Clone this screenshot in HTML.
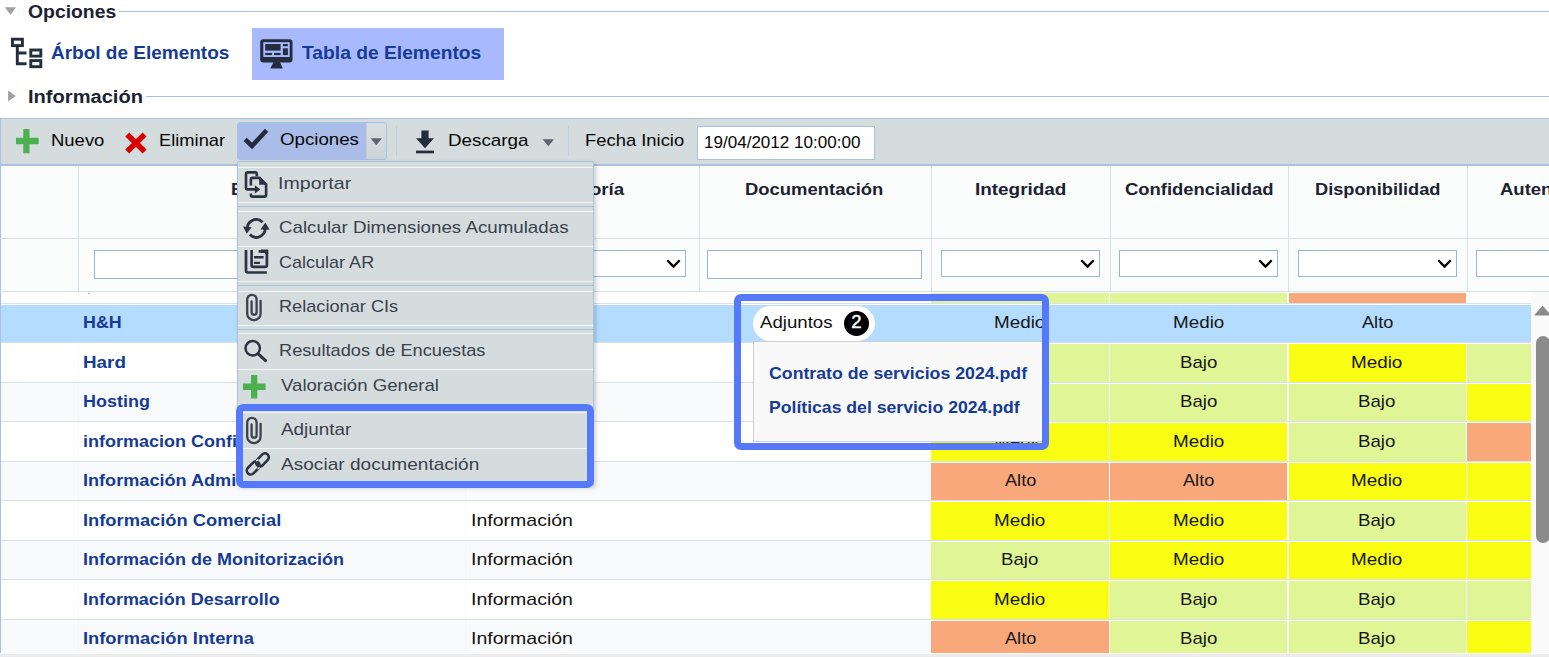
<!DOCTYPE html>
<html><head><meta charset="utf-8">
<style>
*{box-sizing:border-box;margin:0;padding:0}
html,body{width:1549px;height:657px;overflow:hidden;background:#fff}
body{font-family:"Liberation Sans",sans-serif;position:relative;color:#000}
.abs,body>*{position:absolute}
.t{position:absolute;white-space:nowrap;line-height:1;transform-origin:0 0}
/* headings */
.hd{font-weight:bold;font-size:18.5px;color:#1b2231;letter-spacing:.35px}
.hline{height:1px;background:#a9c1dc}
.tab{font-weight:bold;font-size:18px;color:#153b97;letter-spacing:.9px}
/* toolbar */
#tb{left:0;top:118px;width:1549px;height:47px;background:#d5dcdd;border-top:1px solid #a9c1dc;border-bottom:1px solid #a9c1dc;border-left:1px solid #a9c1dc}
.tl{font-size:17px;color:#060606;letter-spacing:.75px}
.sep{width:1px;background:#bfd0e2;top:126px;height:30px}
/* table */
#hdr{left:1px;top:165px;width:1548px;height:127px;background:#fbfcfc;border-top:1px solid #a9c1dc}
.vl{width:1px;background:#d6dfe1;top:166px;height:126px}
.hl{height:1px;background:#d6dfe1;left:0;width:1549px}
.th{font-weight:bold;font-size:16.5px;color:#1b2231;letter-spacing:1.1px;text-align:center}
.inp{background:#fff;border:1px solid #98b5da;border-radius:0}
.chev{position:absolute;right:4.5px;top:7.8px;width:15px;height:9.6px}
.rb{left:1px;width:1530px;height:1px;background:#d8e1e6}
.rbg{left:1px;width:1530px}
.cc{height:37.5px}
/* menu */
#menu{left:237px;top:161px;width:357px;height:325px;background:#d5dcdd;border:1px solid #a9c1dc;border-radius:2px;box-shadow:2px 2px 4px rgba(0,0,0,.18)}
.mi{position:absolute;left:0;width:355px;height:35px}
.mt{position:absolute;left:42px;top:8px;font-size:17px;letter-spacing:.95px;color:#3d444d;white-space:nowrap;line-height:19px}
.ml{position:absolute;left:0;width:355px;height:1px}
.ico{position:absolute}
.hbox{border:7px solid #5679fb;border-radius:8px}
</style></head><body>

<!-- Opciones heading -->
<svg style="left:4px;top:6px" width="14" height="10" viewBox="4 6 14 10"><path d="M4.9 7.2H16L10.45 14.7z" fill="#a0a0a0"/></svg>
<span class="t" style="left:28.11px;top:3.60px;font-size:17.5px;font-weight:bold;transform:scaleX(1.1059);color:#1b2231;">Opciones</span>
<div class="hline" style="left:119px;top:11px;width:1430px"></div>

<!-- tabs -->
<svg style="left:10px;top:37px" width="34" height="32" viewBox="10 37 34 32" fill="none" stroke="#222d3e" stroke-width="2.9">
<rect x="12.4" y="39.2" width="10" height="6.4"/>
<rect x="30.8" y="50" width="10" height="6.1"/>
<rect x="30.8" y="60.6" width="10" height="6.1"/>
<path d="M17.3 46.5V63.7H26.5M17.3 53H26.5"/>
</svg>
<span class="t" style="left:50.93px;top:43.10px;font-size:19px;font-weight:bold;color:#153b97;">Árbol de Elementos</span>

<div style="left:252px;top:28px;width:252px;height:52px;background:#a8bafd"></div>
<svg style="left:259px;top:38px" width="36" height="32" viewBox="259 38 36 32">
<rect x="260.2" y="39.2" width="32.3" height="23.4" rx="3" fill="#222d3e"/>
<rect x="263.3" y="42.2" width="26.4" height="14.8" fill="#a8bafd"/>
<g fill="#222d3e"><rect x="265.2" y="44" width="15.4" height="6.6"/><rect x="282.9" y="44" width="5" height="2.2"/><rect x="282.9" y="48.3" width="5" height="6.8"/><rect x="265.2" y="52.9" width="6.7" height="2.2"/><rect x="274" y="52.9" width="6.6" height="2.2"/>
<path d="M273.6 62H279.9L282.8 68.4H270.2z"/></g>
</svg>
<span class="t" style="left:301.58px;top:43.10px;font-size:19px;font-weight:bold;transform:scaleX(1.0127);color:#153b97;">Tabla de Elementos</span>

<!-- Informacion heading -->
<svg style="left:6px;top:89px" width="12" height="14" viewBox="6 89 12 14"><path d="M8.1 90.4L15.8 96 8.1 101.6z" fill="#a0a0a0"/></svg>
<span class="t" style="left:28.06px;top:88.80px;font-size:17.5px;font-weight:bold;transform:scaleX(1.1482);color:#1b2231;">Información</span>
<div class="hline" style="left:146px;top:96px;width:1403px"></div>

<!-- toolbar -->
<div id="tb"></div>
<svg style="left:16px;top:129px" width="23" height="25" viewBox="0 0 23 25"><path d="M7.3 0h6.2v8.8H22.6v6.4H13.5V24.2H7.3V15.2H0V8.8H7.3z" fill="#4caf50"/></svg>
<span class="t" style="left:51.18px;top:132.00px;font-size:17px;transform:scaleX(1.0865);color:#060606;">Nuevo</span>
<svg style="left:124px;top:131px" width="24" height="24" viewBox="0 0 24 24"><path d="M3.2 3.4L20.6 20.6M20.6 3.4L3.2 20.6" stroke="#d60000" stroke-width="5.6" fill="none"/></svg>
<span class="t" style="left:158.90px;top:132.00px;font-size:17px;transform:scaleX(1.0766);color:#060606;">Eliminar</span>

<div style="left:237px;top:122px;width:150px;height:38px;border:1px solid #a9bfe6;border-radius:3px;background:#d0d7d9;overflow:hidden"><div style="position:absolute;left:0;top:0;width:128px;height:36px;background:#a9bde8"></div><div style="position:absolute;left:128px;top:0;width:21px;height:36px;background:linear-gradient(#d9dfe1,#cdd4d7);border-left:1px solid #c3cdd9"></div></div>
<svg style="left:243px;top:128.2px" width="26" height="22" viewBox="0 0 26 22"><path d="M2.2 11.4L9 18L23.6 2.2" stroke="#232c3b" stroke-width="4.6" fill="none"/></svg>
<span class="t" style="left:279.51px;top:130.90px;font-size:17px;transform:scaleX(1.0994);color:#060606;">Opciones</span>
<svg style="left:370px;top:138px" width="13" height="8" viewBox="0 0 13 8"><path d="M.6 .3H12L6.3 7.2z" fill="#5b6470"/></svg>
<div class="sep" style="left:396px"></div>
<svg style="left:415px;top:130px" width="20" height="24" viewBox="0 0 20 24"><path d="M6.4 .5h7.2v7.7h5.4L10 18.2 1 8.2h5.4z" fill="#232c3b"/><rect x="1" y="20.6" width="18" height="2.7" fill="#232c3b"/></svg>
<span class="t" style="left:448.26px;top:132.00px;font-size:17px;transform:scaleX(1.1056);color:#060606;">Descarga</span>
<svg style="left:542px;top:139px" width="13" height="8" viewBox="0 0 13 8"><path d="M.6 .3H12L6.3 7.2z" fill="#5b6470"/></svg>
<div class="sep" style="left:568px"></div>
<span class="t" style="left:584.69px;top:132.00px;font-size:17px;transform:scaleX(1.0821);color:#060606;">Fecha Inicio</span>
<div class="inp" style="left:697px;top:126px;width:178px;height:34px;border-color:#a9c1dc"></div>
<span class="t" style="left:703.60px;top:134.00px;font-size:17px;transform:scaleX(1.0025);color:#060606;">19/04/2012 10:00:00</span>

<!-- table header -->
<div id="hdr"></div>
<div style="left:0;top:165px;width:1px;height:492px;background:#a9c1dc"></div>
<div class="vl" style="left:78px"></div>
<div class="vl" style="left:463px"></div>
<div class="vl" style="left:699px"></div>
<div class="vl" style="left:931px"></div>
<div class="vl" style="left:1110px"></div>
<div class="vl" style="left:1288px"></div>
<div class="vl" style="left:1467px"></div>
<div class="hl" style="top:238px"></div>
<div class="hl" style="top:291px"></div>
<span class="t" style="left:231.42px;top:181.20px;font-size:17px;font-weight:bold;transform:scaleX(1.0413);color:#1b2231;">Elemento</span>
<span class="t" style="left:538.48px;top:181.20px;font-size:17px;font-weight:bold;transform:scaleX(1.0987);color:#1b2231;">Categoría</span>
<span class="t" style="left:745.37px;top:181.20px;font-size:17px;font-weight:bold;transform:scaleX(1.0844);color:#1b2231;">Documentación</span>
<span class="t" style="left:974.53px;top:181.20px;font-size:17px;font-weight:bold;transform:scaleX(1.1125);color:#1b2231;">Integridad</span>
<span class="t" style="left:1124.74px;top:181.20px;font-size:17px;font-weight:bold;transform:scaleX(1.0841);color:#1b2231;">Confidencialidad</span>
<span class="t" style="left:1314.78px;top:181.20px;font-size:17px;font-weight:bold;transform:scaleX(1.0710);color:#1b2231;">Disponibilidad</span>
<span class="t" style="left:1500.24px;top:181.20px;font-size:17px;font-weight:bold;transform:scaleX(1.0877);color:#1b2231;">Autenticidad</span>
<div class="inp" style="left:94px;top:250px;width:360px;height:29px"></div>
<div class="inp" style="left:473px;top:250px;width:213px;height:27px"><svg class="chev" viewBox="0 0 14 9"><path d="M1.2 1.2L7 7.2 12.8 1.2" stroke="#000" stroke-width="2.2" fill="none"/></svg></div>
<div class="inp" style="left:707px;top:250px;width:215px;height:29px"></div>
<div class="inp" style="left:941px;top:250px;width:159px;height:27px"><svg class="chev" viewBox="0 0 14 9"><path d="M1.2 1.2L7 7.2 12.8 1.2" stroke="#000" stroke-width="2.2" fill="none"/></svg></div>
<div class="inp" style="left:1119px;top:250px;width:159px;height:27px"><svg class="chev" viewBox="0 0 14 9"><path d="M1.2 1.2L7 7.2 12.8 1.2" stroke="#000" stroke-width="2.2" fill="none"/></svg></div>
<div class="inp" style="left:1298px;top:250px;width:159px;height:27px"><svg class="chev" viewBox="0 0 14 9"><path d="M1.2 1.2L7 7.2 12.8 1.2" stroke="#000" stroke-width="2.2" fill="none"/></svg></div>
<div class="inp" style="left:1476px;top:250px;width:159px;height:27px"></div>

<!-- partial row above -->
<div style="left:931px;top:293px;width:178px;height:10px;background:#dff596"></div>
<div style="left:1110px;top:293px;width:177.3px;height:10px;background:#dff596"></div>
<div style="left:1288.6px;top:293px;width:177.2px;height:10px;background:#f9a87b"></div>

<div class="rb" style="top:302.80px"></div>
<div class="rbg" style="top:304.80px;height:37.50px;background:#b3dcfe"></div>
<span class="t" style="left:82.81px;top:314.10px;font-size:17px;font-weight:bold;transform:scaleX(1.0507);color:#153b97;">H&amp;H</span>
<span class="t" style="left:993.95px;top:314.10px;font-size:17px;transform:scaleX(1.1088);color:#161616;">Medio</span>
<span class="t" style="left:1172.65px;top:314.10px;font-size:17px;transform:scaleX(1.1088);color:#161616;">Medio</span>
<span class="t" style="left:1361.71px;top:314.10px;font-size:17px;transform:scaleX(1.0684);color:#161616;">Alto</span>
<div class="rb" style="top:342.30px"></div>
<div class="rbg" style="top:343.30px;height:38.50px;background:#fff"></div>
<div class="cc" style="left:931px;width:178.0px;top:344.30px;background:#dff596"></div>
<div class="cc" style="left:1110px;width:177.3px;top:344.30px;background:#dff596"></div>
<div class="cc" style="left:1288.6px;width:177.2px;top:344.30px;background:#f8fd12"></div>
<div class="cc" style="left:1467.2px;width:63.8px;top:344.30px;background:#dff596"></div>
<span class="t" style="left:82.74px;top:353.60px;font-size:17px;font-weight:bold;transform:scaleX(1.1076);color:#153b97;">Hard</span>
<span class="t" style="left:1179.67px;top:353.60px;font-size:17px;transform:scaleX(1.0966);color:#161616;">Bajo</span>
<span class="t" style="left:1350.95px;top:353.60px;font-size:17px;transform:scaleX(1.1088);color:#161616;">Medio</span>
<div class="rb" style="top:381.80px"></div>
<div class="rbg" style="top:382.80px;height:38.50px;background:#f9fafb"></div>
<div class="cc" style="left:931px;width:178.0px;top:383.80px;background:#dff596"></div>
<div class="cc" style="left:1110px;width:177.3px;top:383.80px;background:#dff596"></div>
<div class="cc" style="left:1288.6px;width:177.2px;top:383.80px;background:#dff596"></div>
<div class="cc" style="left:1467.2px;width:63.8px;top:383.80px;background:#f8fd12"></div>
<span class="t" style="left:82.80px;top:393.10px;font-size:17px;font-weight:bold;transform:scaleX(1.0575);color:#153b97;">Hosting</span>
<span class="t" style="left:1179.67px;top:393.10px;font-size:17px;transform:scaleX(1.0966);color:#161616;">Bajo</span>
<span class="t" style="left:1357.97px;top:393.10px;font-size:17px;transform:scaleX(1.0966);color:#161616;">Bajo</span>
<div class="rb" style="top:421.30px"></div>
<div class="rbg" style="top:422.30px;height:38.50px;background:#fff"></div>
<div class="cc" style="left:931px;width:178.0px;top:423.30px;background:#f8fd12"></div>
<div class="cc" style="left:1110px;width:177.3px;top:423.30px;background:#f8fd12"></div>
<div class="cc" style="left:1288.6px;width:177.2px;top:423.30px;background:#dff596"></div>
<div class="cc" style="left:1467.2px;width:63.8px;top:423.30px;background:#f9a87b"></div>
<span class="t" style="left:82.74px;top:432.60px;font-size:17px;font-weight:bold;transform:scaleX(1.0584);color:#153b97;">informacion Confi</span>
<span class="t" style="left:993.95px;top:432.60px;font-size:17px;transform:scaleX(1.1088);color:#161616;">Medio</span>
<span class="t" style="left:1172.65px;top:432.60px;font-size:17px;transform:scaleX(1.1088);color:#161616;">Medio</span>
<span class="t" style="left:1357.97px;top:432.60px;font-size:17px;transform:scaleX(1.0966);color:#161616;">Bajo</span>
<div class="rb" style="top:460.80px"></div>
<div class="rbg" style="top:461.80px;height:38.50px;background:#f9fafb"></div>
<div class="cc" style="left:931px;width:178.0px;top:462.80px;background:#f9a87b"></div>
<div class="cc" style="left:1110px;width:177.3px;top:462.80px;background:#f9a87b"></div>
<div class="cc" style="left:1288.6px;width:177.2px;top:462.80px;background:#f8fd12"></div>
<div class="cc" style="left:1467.2px;width:63.8px;top:462.80px;background:#f8fd12"></div>
<span class="t" style="left:82.79px;top:472.10px;font-size:17px;font-weight:bold;transform:scaleX(1.0649);color:#153b97;">Información Admi</span>
<span class="t" style="left:1004.71px;top:472.10px;font-size:17px;transform:scaleX(1.0684);color:#161616;">Alto</span>
<span class="t" style="left:1183.41px;top:472.10px;font-size:17px;transform:scaleX(1.0684);color:#161616;">Alto</span>
<span class="t" style="left:1350.95px;top:472.10px;font-size:17px;transform:scaleX(1.1088);color:#161616;">Medio</span>
<div class="rb" style="top:500.30px"></div>
<div class="rbg" style="top:501.30px;height:38.50px;background:#fff"></div>
<div class="cc" style="left:931px;width:178.0px;top:502.30px;background:#f8fd12"></div>
<div class="cc" style="left:1110px;width:177.3px;top:502.30px;background:#f8fd12"></div>
<div class="cc" style="left:1288.6px;width:177.2px;top:502.30px;background:#dff596"></div>
<div class="cc" style="left:1467.2px;width:63.8px;top:502.30px;background:#f8fd12"></div>
<span class="t" style="left:82.78px;top:511.60px;font-size:17px;font-weight:bold;transform:scaleX(1.0760);color:#153b97;">Información Comercial</span>
<span class="t" style="left:470.90px;top:511.60px;font-size:17px;transform:scaleX(1.1481);color:#111;">Información</span>
<span class="t" style="left:993.95px;top:511.60px;font-size:17px;transform:scaleX(1.1088);color:#161616;">Medio</span>
<span class="t" style="left:1172.65px;top:511.60px;font-size:17px;transform:scaleX(1.1088);color:#161616;">Medio</span>
<span class="t" style="left:1357.97px;top:511.60px;font-size:17px;transform:scaleX(1.0966);color:#161616;">Bajo</span>
<div class="rb" style="top:539.80px"></div>
<div class="rbg" style="top:540.80px;height:38.50px;background:#f9fafb"></div>
<div class="cc" style="left:931px;width:178.0px;top:541.80px;background:#dff596"></div>
<div class="cc" style="left:1110px;width:177.3px;top:541.80px;background:#f8fd12"></div>
<div class="cc" style="left:1288.6px;width:177.2px;top:541.80px;background:#f8fd12"></div>
<div class="cc" style="left:1467.2px;width:63.8px;top:541.80px;background:#f8fd12"></div>
<span class="t" style="left:82.80px;top:551.10px;font-size:17px;font-weight:bold;transform:scaleX(1.0589);color:#153b97;">Información de Monitorización</span>
<span class="t" style="left:470.90px;top:551.10px;font-size:17px;transform:scaleX(1.1481);color:#111;">Información</span>
<span class="t" style="left:1000.97px;top:551.10px;font-size:17px;transform:scaleX(1.0966);color:#161616;">Bajo</span>
<span class="t" style="left:1172.65px;top:551.10px;font-size:17px;transform:scaleX(1.1088);color:#161616;">Medio</span>
<span class="t" style="left:1350.95px;top:551.10px;font-size:17px;transform:scaleX(1.1088);color:#161616;">Medio</span>
<div class="rb" style="top:579.30px"></div>
<div class="rbg" style="top:580.30px;height:38.50px;background:#fff"></div>
<div class="cc" style="left:931px;width:178.0px;top:581.30px;background:#f8fd12"></div>
<div class="cc" style="left:1110px;width:177.3px;top:581.30px;background:#dff596"></div>
<div class="cc" style="left:1288.6px;width:177.2px;top:581.30px;background:#dff596"></div>
<div class="cc" style="left:1467.2px;width:63.8px;top:581.30px;background:#dff596"></div>
<span class="t" style="left:82.80px;top:590.60px;font-size:17px;font-weight:bold;transform:scaleX(1.0565);color:#153b97;">Información Desarrollo</span>
<span class="t" style="left:470.90px;top:590.60px;font-size:17px;transform:scaleX(1.1481);color:#111;">Información</span>
<span class="t" style="left:993.95px;top:590.60px;font-size:17px;transform:scaleX(1.1088);color:#161616;">Medio</span>
<span class="t" style="left:1179.67px;top:590.60px;font-size:17px;transform:scaleX(1.0966);color:#161616;">Bajo</span>
<span class="t" style="left:1357.97px;top:590.60px;font-size:17px;transform:scaleX(1.0966);color:#161616;">Bajo</span>
<div class="rb" style="top:618.80px"></div>
<div class="rbg" style="top:619.80px;height:38.50px;background:#f9fafb"></div>
<div class="cc" style="left:931px;width:178.0px;top:620.80px;background:#f9a87b"></div>
<div class="cc" style="left:1110px;width:177.3px;top:620.80px;background:#dff596"></div>
<div class="cc" style="left:1288.6px;width:177.2px;top:620.80px;background:#dff596"></div>
<div class="cc" style="left:1467.2px;width:63.8px;top:620.80px;background:#f8fd12"></div>
<span class="t" style="left:82.78px;top:630.10px;font-size:17px;font-weight:bold;transform:scaleX(1.0764);color:#153b97;">Información Interna</span>
<span class="t" style="left:470.90px;top:630.10px;font-size:17px;transform:scaleX(1.1481);color:#111;">Información</span>
<span class="t" style="left:1004.71px;top:630.10px;font-size:17px;transform:scaleX(1.0684);color:#161616;">Alto</span>
<span class="t" style="left:1179.67px;top:630.10px;font-size:17px;transform:scaleX(1.0966);color:#161616;">Bajo</span>
<span class="t" style="left:1357.97px;top:630.10px;font-size:17px;transform:scaleX(1.0966);color:#161616;">Bajo</span>

<div style="left:78px;top:343px;width:1px;height:310px;background:rgba(190,200,210,.08)"></div>
<div style="left:465px;top:343px;width:1px;height:310px;background:rgba(190,200,210,.08)"></div>
<div style="left:88px;top:293px;width:2px;height:1px;background:#a9b6d6"></div>
<!-- scrollbars -->
<div style="left:1531px;top:292px;width:18px;height:362px;background:#fafafa"></div>
<svg style="left:1534px;top:305px" width="15" height="11" viewBox="0 0 15 11"><path d="M0 10.4L8.6 .6 17 10.4z" fill="#8b8b8b"/></svg>
<div style="left:1536.3px;top:336px;width:14px;height:207px;background:#8b8b8b;border-radius:7px"></div>
<div style="left:0;top:652.7px;width:1549px;height:1px;background:#fff"></div>
<div style="left:0;top:653.6px;width:1549px;height:4px;background:#ececec"></div>

<!-- Adjuntos popup -->
<div style="left:753px;top:340.6px;width:292px;height:101px;background:#f9f9fa;border:1px solid #cfcfcf"></div>
<div style="left:753px;top:306px;width:122px;height:35px;background:#fff;border-radius:17.5px"></div>
<span class="t" style="left:759.66px;top:314.10px;font-size:17px;transform:scaleX(1.0960);color:#111;">Adjuntos</span>
<div style="left:844px;top:310.5px;width:25px;height:25px;border-radius:50%;background:#000"></div>
<span class="t" style="left:844px;width:25px;top:313.4px;font-size:18.5px;-webkit-text-stroke:.45px #fff;color:#fff;text-align:center">2</span>
<span class="t" style="left:769.27px;top:364.60px;font-size:17px;font-weight:bold;transform:scaleX(1.0427);color:#153b97;">Contrato de servicios 2024.pdf</span>
<span class="t" style="left:768.82px;top:399.00px;font-size:17px;font-weight:bold;transform:scaleX(1.0362);color:#153b97;">Políticas del servicio 2024.pdf</span>
<div class="hbox" style="left:733.8px;top:294.3px;width:315.5px;height:156.1px;border-radius:7px"></div>

<!-- menu -->
<div id="menu">
<div class="ml" style="top:4.9px;background:#f4f7f7"></div>
<div class="ml" style="top:40.2px;background:#f4f7f7"></div>
<div class="ml" style="top:43.9px;background:#a9c1dc"></div>
<div class="ml" style="top:48.9px;background:#f4f7f7"></div>
<div class="ml" style="top:83.6px;background:#f4f7f7"></div>
<div class="ml" style="top:118.9px;background:#f4f7f7"></div>
<div class="ml" style="top:123.0px;background:#a9c1dc"></div>
<div class="ml" style="top:128.5px;background:#f4f7f7"></div>
<div class="ml" style="top:162.8px;background:#f4f7f7"></div>
<div class="ml" style="top:167.1px;background:#a9c1dc"></div>
<div class="ml" style="top:171.4px;background:#f4f7f7"></div>
<div class="ml" style="top:206.8px;background:#f4f7f7"></div>
<div class="ml" style="top:241.9px;background:#f4f7f7"></div>
<div class="ml" style="top:245.9px;background:#a9c1dc"></div>
<div class="ml" style="top:250.3px;background:#f4f7f7"></div>
<div class="ml" style="top:285.9px;background:#f4f7f7"></div>
<div class="ml" style="top:320.5px;background:#f4f7f7"></div>
<span class="t" style="left:40.40px;top:13.10px;font-size:17px;letter-spacing:0.067px;transform:scaleX(1.1500);color:#39414c;">Importar</span>
<svg class="ico" style="left:5px;top:7px" width="27" height="31" viewBox="243 169 27 31" fill="none" stroke="#2a3341" stroke-width="2.6"><path d="M256.8 176.2V174Q256.8 172.4 255.2 172.4H247.6Q246 172.4 246 174V187.8Q246 189.4 247.6 189.4H256"/><path d="M250.9 185.6V179.5Q250.9 177.9 252.5 177.9H259.6L266.1 184.4V195Q266.1 196.6 264.5 196.6H252.5Q250.9 196.6 250.9 195V193.4"/><path d="M259.2 176.8V184.7H267.2Z" fill="#2a3341" stroke="none"/><path d="M254.8 185.3L260.4 189.4L254.8 193.5Z" fill="#2a3341" stroke="none"/></svg>
<span class="t" style="left:41.45px;top:57.20px;font-size:17px;transform:scaleX(1.1021);color:#39414c;">Calcular Dimensiones Acumuladas</span>
<svg class="ico" style="left:3px;top:54px" width="30" height="25" viewBox="241 216 30 25" fill="none" stroke="#2a3341" stroke-width="2.8"><path d="M247.4 229.6A8.9 8.9 0 0 1 262.6 222.2"/><path d="M265 227.2A8.9 8.9 0 0 1 249.8 234.6" /><path d="M260.4 229.4L265.4 222.6L269.6 229.8Z" fill="#2a3341" stroke="none"/><path d="M243 226.6L251.6 227.2L246.8 233.8Z" fill="#2a3341" stroke="none"/></svg>
<span class="t" style="left:41.48px;top:91.90px;font-size:17px;transform:scaleX(1.0602);color:#39414c;">Calcular AR</span>
<svg class="ico" style="left:5px;top:86px" width="27" height="27" viewBox="243 248 27 27" fill="none" stroke="#2a3341" stroke-width="2.7"><path d="M246 250V270.6Q246 272.5 247.9 272.5H266.8"/><path d="M251.6 250V265Q251.6 266.9 253.5 266.9H265Q266.9 266.9 266.9 265V253.3Q266.9 251.4 265 251.4H258.6"/><path d="M261 251.2H266.6V254" stroke-width="3.4"/><path d="M254 257.2H263.6M254 262.9H260" stroke-width="2.4"/></svg>
<span class="t" style="left:40.91px;top:135.80px;font-size:17px;transform:scaleX(1.0687);color:#39414c;">Relacionar CIs</span>
<svg class="ico" style="left:6px;top:129.7px" width="20" height="31" viewBox="244 291.7 20 31" fill="none" stroke="#3a424d" stroke-width="2.3" stroke-linecap="round"><path d="M251.6 301.2 V311.9 A2.5 2.5 0 0 0 256.6 311.9 V299.2 A4.7 4.7 0 0 0 247.2 299.2 V313.09999999999997 A6.7 6.7 0 0 0 260.6 313.09999999999997 V300.5"/></svg>
<span class="t" style="left:40.91px;top:180.00px;font-size:17px;transform:scaleX(1.0709);color:#39414c;">Resultados de Encuestas</span>
<svg class="ico" style="left:5px;top:176px" width="26" height="26" viewBox="243 338 26 26" fill="none" stroke="#2a3341"><circle cx="252.7" cy="348.3" r="7.2" stroke-width="2.5"/><path d="M258.2 353.8L265.6 360.6" stroke-width="3" stroke-linecap="round"/></svg>
<span class="t" style="left:42.62px;top:214.70px;font-size:17px;transform:scaleX(1.0948);color:#39414c;">Valoración General</span>
<svg class="ico" style="left:4.900000000000006px;top:213.0px" width="23" height="24" viewBox="0 0 23 24"><path d="M8 0h6.3v8.5H22.5v6.4H14.3V23.4H8V14.9H0V8.5H8z" fill="#4caf50"/></svg>
<span class="t" style="left:42.66px;top:258.80px;font-size:17px;transform:scaleX(1.1079);color:#39414c;">Adjuntar</span>
<svg class="ico" style="left:6px;top:253.10000000000002px" width="20" height="31" viewBox="244 415.1 20 31" fill="none" stroke="#3a424d" stroke-width="2.3" stroke-linecap="round"><path d="M251.6 424.6 V435.3 A2.5 2.5 0 0 0 256.6 435.3 V422.6 A4.7 4.7 0 0 0 247.2 422.6 V436.5 A6.7 6.7 0 0 0 260.6 436.5 V423.90000000000003"/></svg>
<span class="t" style="left:42.66px;top:293.90px;font-size:17px;transform:scaleX(1.1221);color:#39414c;">Asociar documentación</span>
<svg class="ico" style="left:5px;top:288px" width="29" height="28" viewBox="243 450 29 28" fill="none" stroke="#2a3341" stroke-width="2.6"><rect x="245.75" y="464.10" width="15" height="7.8" rx="3.9" transform="rotate(-44.5 253.25 468.0)"/><rect x="254.95" y="455.95" width="15" height="7.8" rx="3.9" transform="rotate(-47 262.45 459.85)"/><path d="M256.2 461.2L258.4 459.2" stroke="#d5dcdd" stroke-width="1.3"/><path d="M257.6 469.2L259.6 467.2" stroke="#d5dcdd" stroke-width="1.3"/></svg>
</div>
<div class="hbox" style="left:236px;top:404px;width:358.3px;height:84px;border-radius:7px"></div>

</body></html>
